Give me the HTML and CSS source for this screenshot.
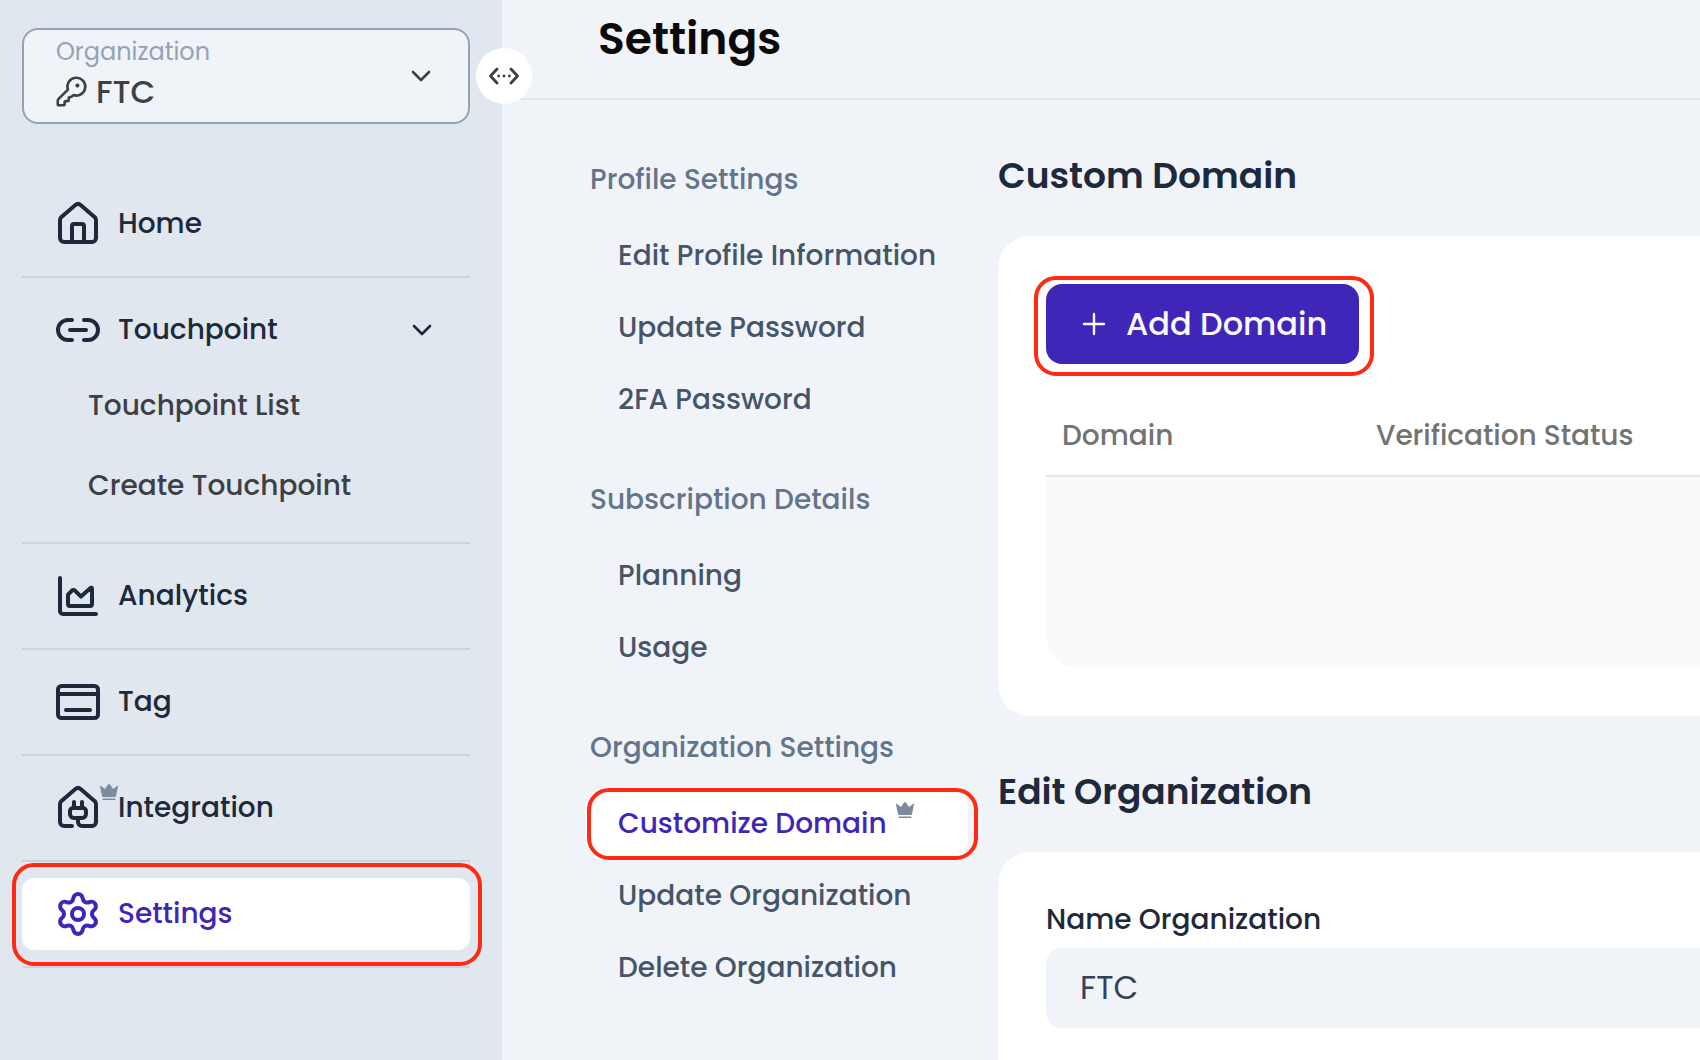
FILE: index.html
```
<!DOCTYPE html>
<html lang="en">
<head>
<meta charset="utf-8">
<title>Settings</title>
<link rel="stylesheet" href="styles.css">
</head>
<body>
<div class="app">
  <aside class="sidebar">
    <div class="org-select">
      <div class="org-info">
        <span class="org-label">Organization</span>
        <span class="org-name">
          <svg class="icon-key" viewBox="0 0 24 24"><path d="M2.586 17.414A2 2 0 0 0 2 18.828V21a1 1 0 0 0 1 1h3a1 1 0 0 0 1-1v-1a1 1 0 0 1 1-1h1a1 1 0 0 0 1-1v-1a1 1 0 0 1 1-1h.172a2 2 0 0 0 1.414-.586l.814-.814a6.5 6.5 0 1 0-4-4z"/><circle class="dot" cx="16.3" cy="7.7" r="1.5"/></svg>
          <span class="org-text">FTC</span>
        </span>
      </div>
      <svg class="chevron" viewBox="0 0 20 12"><path d="M2 2l8 8 8-8"/></svg>
    </div>
    <button class="toggle" aria-label="Toggle sidebar">
      <svg viewBox="0 0 32 20"><path d="M9 3L2.5 10 9 17M23 3l6.500 7L23 17"/><g class="dot"><circle cx="10.600" cy="10" r="1.400"/><circle cx="16" cy="10" r="1.400"/><circle cx="21.400" cy="10" r="1.400"/></g></svg>
    </button>
    <nav class="nav">
      <div class="nav-group">
        <a class="nav-item"><svg class="icon" viewBox="0 0 48 48"><path d="M6 20v18a4 4 0 0 0 4 4h28a4 4 0 0 0 4-4V20a4 4 0 0 0-1.500-3.100L26.600 5a4 4 0 0 0-5.200 0L7.500 16.900A4 4 0 0 0 6 20z"/><path d="M18 42V26a2 2 0 0 1 2-2h8a2 2 0 0 1 2 2v16"/></svg><span>Home</span></a>
      </div>
      <div class="nav-group">
        <a class="nav-item"><svg class="icon" viewBox="0 0 48 48"><path d="M18 14h-4a10 10 0 0 0 0 20h4M30 14h4a10 10 0 0 1 0 20h-4M16 24h16"/></svg><span>Touchpoint</span><svg class="chevron" viewBox="0 0 20 12"><path d="M2 2l8 8 8-8"/></svg></a>
        <div class="subnav">
          <a>Touchpoint List</a>
          <a>Create Touchpoint</a>
        </div>
      </div>
      <div class="nav-group">
        <a class="nav-item"><svg class="icon" viewBox="0 0 48 48"><path d="M6 6v33a3 3 0 0 0 3 3h33"/><path d="M14 22.600V32a2 2 0 0 0 2 2h20a2 2 0 0 0 2-2V17c0-1.500-.8-1.600-1.800-.8L27 24.600l-6-6a2 2 0 0 0-3 0z"/></svg><span>Analytics</span></a>
      </div>
      <div class="nav-group">
        <a class="nav-item"><svg class="icon" viewBox="0 0 48 48"><rect x="4" y="8" width="40" height="32" rx="3.500"/><path d="M4 16h40M12 32h24"/></svg><span>Tag</span></a>
      </div>
      <div class="nav-group">
        <a class="nav-item"><span class="icon-wrap"><svg class="icon" viewBox="0 0 48 48"><path d="M18 42h-8a4 4 0 0 1-4-4V20a4 4 0 0 1 1.500-3.100L21.400 5a4 4 0 0 1 5.200 0l13.900 11.900A4 4 0 0 1 42 20v18a4 4 0 0 1-4 4H28a4 4 0 0 1-4-4v-4"/><path d="M20 18v6M28 18v6M19 24h10a3 3 0 0 1 3 3v3a4 4 0 0 1-4 4h-8a4 4 0 0 1-4-4v-3a3 3 0 0 1 3-3z"/></svg><svg class="crown" viewBox="0 0 18 16"><path d="M0 2.500Q0 1.500 1 2L5 5 8 .5q1-1 2 0L13 5l4-3q1-.5 1 .5L16 12q-.2 1-1 1H3q-.8 0-1-1z"/><path d="M2.800 14.600h12.400q.8.700 0 1.400H2.800q-.8-.7 0-1.400z"/></svg></span><span>Integration</span></a>
      </div>
      <div class="nav-group marked">
        <a class="nav-item active"><svg class="icon gear" viewBox="0 0 24 24"><path d="M9.671 4.136a2.340 2.340 0 0 1 4.659 0 2.340 2.340 0 0 0 3.319 1.915 2.340 2.340 0 0 1 2.330 4.033 2.340 2.340 0 0 0 0 3.831 2.340 2.340 0 0 1-2.330 4.033 2.340 2.340 0 0 0-3.319 1.915 2.340 2.340 0 0 1-4.659 0 2.340 2.340 0 0 0-3.320-1.915 2.340 2.340 0 0 1-2.330-4.033 2.340 2.340 0 0 0 0-3.831A2.340 2.340 0 0 1 6.350 6.051a2.340 2.340 0 0 0 3.319-1.915"/><circle cx="12" cy="12" r="3"/></svg><span>Settings</span></a>
      </div>
    </nav>
  </aside>
  <main class="main">
    <header class="header"><h1>Settings</h1></header>
    <div class="page">
      <nav class="menu">
        <section>
          <h3>Profile Settings</h3>
          <a>Edit Profile Information</a>
          <a>Update Password</a>
          <a>2FA Password</a>
        </section>
        <section>
          <h3>Subscription Details</h3>
          <a>Planning</a>
          <a>Usage</a>
        </section>
        <section>
          <h3>Organization Settings</h3>
          <a class="active">Customize Domain<svg class="crown" viewBox="0 0 18 16"><path d="M0 2.500Q0 1.500 1 2L5 5 8 .5q1-1 2 0L13 5l4-3q1-.5 1 .5L16 12q-.2 1-1 1H3q-.8 0-1-1z"/><path d="M2.800 14.600h12.400q.8.700 0 1.400H2.800q-.8-.7 0-1.400z"/></svg></a>
          <a>Update Organization</a>
          <a>Delete Organization</a>
        </section>
      </nav>
      <div class="content">
        <h2>Custom Domain</h2>
        <div class="card">
          <button class="add"><svg viewBox="0 0 24 24"><path d="M12 2v20M2 12h20"/></svg><span>Add Domain</span></button>
          <div class="table-head"><span class="col-domain">Domain</span><span class="col-status">Verification Status</span></div>
          <div class="table-body"></div>
        </div>
        <h2>Edit Organization</h2>
        <div class="card form-card">
          <label for="org-name">Name Organization</label>
          <input id="org-name" type="text" value="FTC">
        </div>
      </div>
    </div>
  </main>
</div>
</body>
</html>
```
FILE: styles.css
```
* { box-sizing: border-box; }
body {
  margin: 0;
  overflow: hidden;
  font-family: Poppins, Inter, sans-serif;
  font-size: 28px;
  font-weight: 500;
  color: #1e293b;
  background: #f0f4f9;
}
h1, h2, h3 { margin: 0; }
button { border: 0; padding: 0; font: inherit; }
svg {
  display: block;
  flex: none;
  fill: none;
  stroke: currentColor;
  stroke-linecap: round;
  stroke-linejoin: round;
}
.app { display: flex; height: 1060px; overflow: hidden; }

/* Sidebar */
.sidebar {
  position: relative;
  flex: none;
  width: 502px;
  padding: 28px 32px 0 22px;
  background: #e0e7ef;
}
.org-select {
  display: flex;
  align-items: center;
  justify-content: space-between;
  height: 96px;
  padding: 0 37px 0 32px;
  border: 2px solid #94a3b8;
  border-radius: 16px;
  background: #f0f4f9;
  color: #3f3f46;
}
.org-info { display: flex; flex-direction: column; padding-bottom: 4px; }
.org-label {
  height: 36px;
  line-height: 36px;
  font-size: 24px;
  font-weight: 400;
  color: #94a3b8;
}
.org-name { display: flex; align-items: center; height: 44px; font-size: 32px; line-height: 44px; gap: 8px; }
.icon-key { width: 33px; height: 33px; margin: 0 0 1px -1px; stroke-width: 1.9; }
.dot { fill: currentColor; stroke: none; }
.chevron { width: 20px; height: 12px; stroke-width: 2.6; }
.toggle {
  position: absolute;
  left: 476px;
  top: 48px;
  width: 56px;
  height: 56px;
  border-radius: 50%;
  background: #fff;
  color: #3f3f46;
  display: grid;
  place-items: center;
  z-index: 2;
}
.toggle svg { width: 32px; height: 20px; stroke-width: 2.8; }
.nav { margin-top: 48px; }
.nav-group { position: relative; padding: 16px 0; border-bottom: 2px solid #c9d4e1; }
.nav-item {
  display: flex;
  align-items: center;
  gap: 16px;
  height: 72px;
  padding: 0 38px 0 32px;
  border-radius: 12px;
}
.nav-item .chevron { margin-left: auto; }
.nav-item.active { background: #fff; color: #4026b8; }
.icon { width: 48px; height: 48px; stroke-width: 4; }
.gear { stroke-width: 2; }
.icon-wrap { position: relative; }
.icon-wrap .crown { position: absolute; left: 46px; top: 0; }
.crown { width: 18px; height: 16px; fill: #7c8c9e; stroke: none; }
.subnav { margin-left: 3px; border-left: 2px solid #e2e7ea; color: #3f3f46; }
.subnav a { display: block; height: 80px; line-height: 80px; padding-left: 61px; }
.marked::after {
  content: "";
  position: absolute;
  inset: 1px -12px 0 -10px;
  border: 4px solid #ff2a14;
  border-radius: 22px;
}

/* Header */
.main { flex: 1; min-width: 0; }
.header { height: 100px; padding-left: 96px; border-bottom: 2px solid #e5e6e9; }
h1 { font-size: 44px; line-height: 78px; font-weight: 600; color: #0a0a0a; }
.page { display: flex; padding-left: 84px; }

/* Settings menu */
.menu { flex: none; width: 412px; padding: 56px 30px 0 0; display: flex; flex-direction: column; gap: 40px; }
.menu h3 { height: 48px; margin-bottom: 16px; padding-left: 4px; font-size: 28px; line-height: 47px; font-weight: 500; color: #64748b; }
.menu a { position: relative; display: flex; height: 72px; padding-left: 32px; line-height: 71px; color: #475569; border-radius: 20px; white-space: nowrap; }
.menu a.active { background: #fff; color: #4026b8; }
.menu a.active::after {
  content: "";
  position: absolute;
  inset: 0 -10px 0 1px;
  border: 4px solid #ff2a14;
  border-radius: 22px;
}
.menu .crown { margin: 14px 0 0 9px; }

/* Content */
.content { flex: 1; min-width: 0; padding-top: 48px; }
h2 { height: 56px; margin-bottom: 32px; font-size: 36px; line-height: 55px; font-weight: 600; }
.card { padding: 48px 0 48px 48px; border-radius: 32px 0 0 32px; background: #fff; }
.card + h2 { margin-top: 48px; }
.add {
  position: relative;
  display: flex;
  align-items: center;
  gap: 20px;
  width: 313px;
  height: 80px;
  padding-left: 36px;
  border-radius: 16px;
  background: #4026b8;
  color: #fafafa;
  font-size: 32px;
}
.add svg { width: 24px; height: 24px; stroke-width: 2.4; }
.add::after {
  content: "";
  position: absolute;
  inset: -8px -15px -12px -12px;
  border: 4px solid #ff2a14;
  border-radius: 22px;
}
.table-head { display: flex; height: 82px; margin-top: 31px; line-height: 82px; border-bottom: 2px solid #e0e7ee; color: #737373; }
.col-domain { width: 330px; padding-left: 16px; }
.col-status { letter-spacing: -.05px; }
.table-body { height: 191px; border-radius: 0 0 0 32px; background: #f8fafc; }
.form-card { height: 300px; }
label { display: block; height: 40px; margin-bottom: 8px; line-height: 40px; }
input {
  display: block;
  width: 100%;
  height: 80px;
  padding: 0 34px;
  border: 0;
  border-radius: 16px 0 0 16px;
  background: #f0f4f9;
  color: #334155;
  font: 400 32px Poppins, Inter, sans-serif;
}
```
